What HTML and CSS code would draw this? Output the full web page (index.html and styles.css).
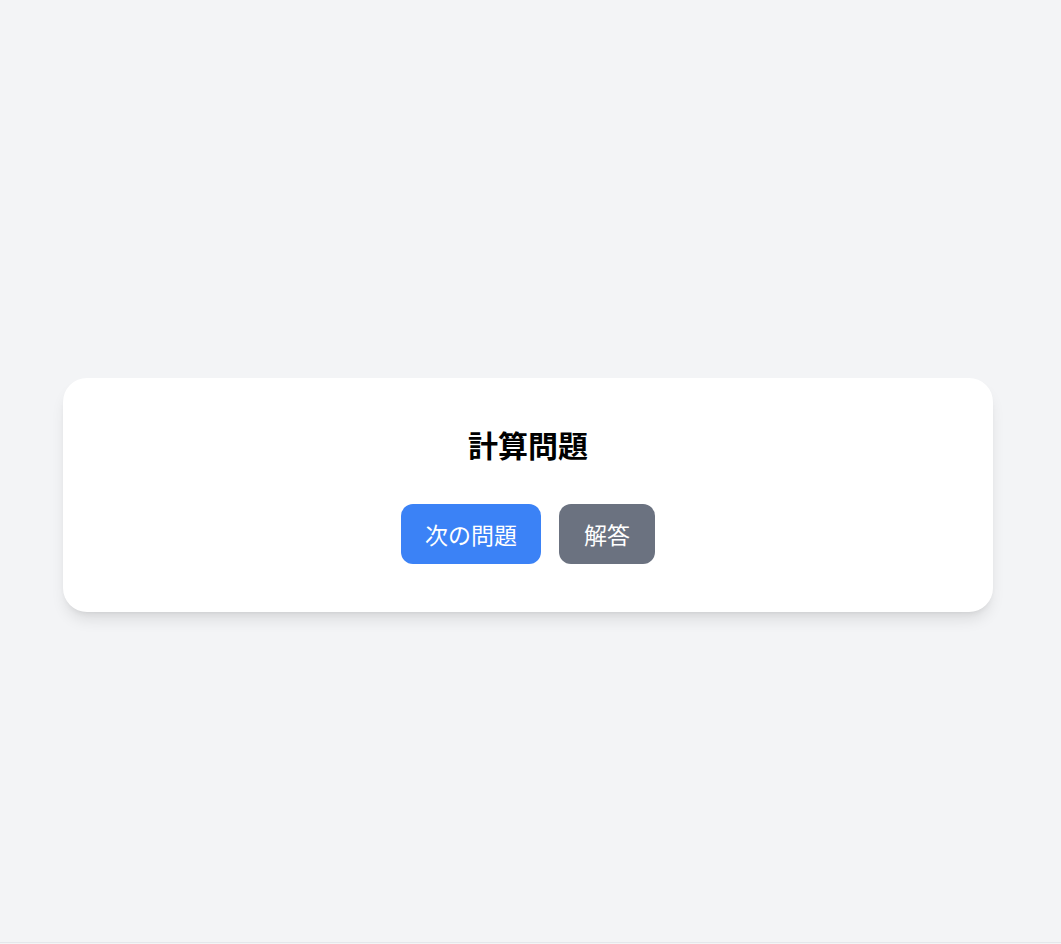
FILE: index.html
```html
<!DOCTYPE html>
<html lang="ja">
<head>
<meta charset="utf-8">
<title>計算問題</title>
<link rel="stylesheet" href="styles.css">
</head>
<body>
<main class="page">
  <section class="card">
    <h1 class="title">計算問題</h1>
    <div class="actions">
      <button class="btn btn-primary" type="button">次の問題</button>
      <button class="btn btn-secondary" type="button">解答</button>
    </div>
  </section>
</main>
</body>
</html>
```

FILE: styles.css
```css
html, body {
  margin: 0;
  padding: 0;
}
body {
  background: #f3f4f6;
  font-family: "Noto Sans CJK JP", "Noto Sans", sans-serif;
}
.page {
  box-sizing: border-box;
  height: 943px;
  border-bottom: 1px solid #e5e7eb;
  padding: 47px 68px 0 63px;
  display: flex;
  align-items: center;
}
.card {
  flex: 1;
  background: #ffffff;
  border-radius: 24px;
  box-shadow: 0 10px 15px -3px rgba(0,0,0,0.1), 0 4px 6px -4px rgba(0,0,0,0.1);
  padding: 48px;
  display: flex;
  flex-direction: column;
  align-items: center;
}
.title {
  margin: 0 0 42px;
  font-size: 30px;
  line-height: 36px;
  font-weight: 700;
  color: #000;
}
.actions {
  display: flex;
  gap: 18px;
}
.btn {
  border: none;
  height: 60px;
  padding: 0 24px;
  border-radius: 12px;
  font-family: inherit;
  font-size: 23px;
  color: #ffffff;
  cursor: pointer;
}
.btn-secondary {
  padding: 0 25px;
}
.btn-primary {
  background: #3b82f6;
}
.btn-secondary {
  background: #6b7280;
}
```
